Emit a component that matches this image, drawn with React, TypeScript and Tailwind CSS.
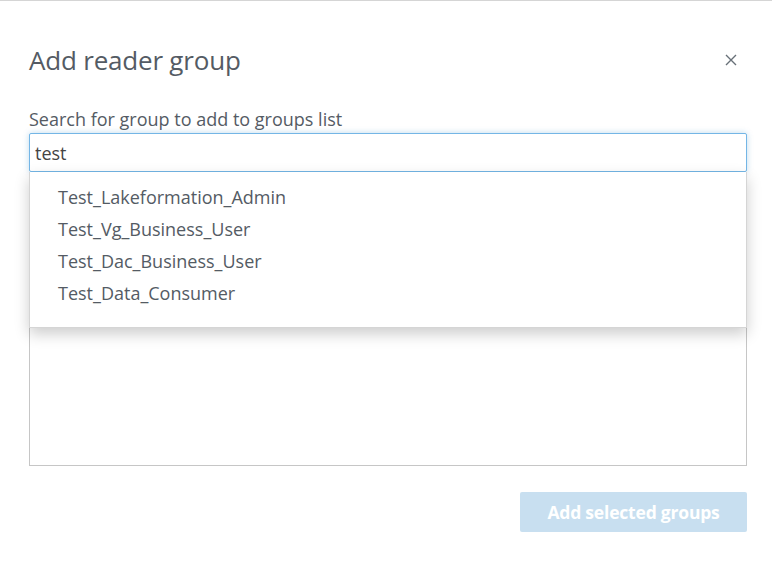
import React, { useState } from 'react';

const GROUPS = ['Test_Lakeformation_Admin', 'Test_Vg_Business_User', 'Test_Dac_Business_User', 'Test_Data_Consumer'];

export default function App() {
  const [query, setQuery] = useState('test');

  return (
    <div
      className="w-[772px] h-[564px] bg-white border-t border-[#d5d5d5] text-[#545b64] overflow-hidden"
      style={{ fontFamily: '"Open Sans", "Noto Sans", sans-serif' }}
    >
      {/* Header */}
      <div className="flex items-center justify-between pl-[29px] pr-[33px] pt-[39px]">
        <h1 className="text-[26px] leading-[40px] font-normal tracking-[-0.2px]">Add reader group</h1>
        <button className="text-[#687078] w-4 h-4 flex items-center justify-center">
          <svg width="12" height="12" viewBox="0 0 12 12" fill="none" stroke="currentColor" strokeWidth="1.4">
            <path d="M1 1 L11 11 M11 1 L1 11" />
          </svg>
        </button>
      </div>

      <div className="pl-[29px] pr-[25px] pt-[28px]">
        <label className="block text-[18px] leading-[22px] text-[#545b64]">
          Search for group to add to groups list
        </label>

        <div className="relative mt-[3px]">
          <input
            value={query}
            onChange={(e) => setQuery(e.target.value)}
            className="w-full h-[39px] border border-[#74b6e6] rounded-[2px] px-[5px] text-[18px] text-[#444] outline-none shadow-[0_0_6px_rgba(0,115,187,0.25)] bg-white"
          />

          {/* Dropdown */}
          <div className="absolute left-0 right-0 top-[39px] z-10 bg-white border border-[#d5d5d5] border-t-0 shadow-[0_6px_14px_rgba(0,0,0,0.2)] pt-[9px] pb-[18px]">
            {GROUPS.map((g) => (
              <div key={g} className="pl-[28px] h-[32px] flex items-center text-[18px] text-[#545b64]">
                {g}
              </div>
            ))}
          </div>

          {/* Selected groups list */}
          <div className="h-[294px] border border-[#c6c6c6] border-t-0 bg-white" />
        </div>

        <div className="flex justify-end pt-[26px]">
          <button
            disabled
            className="w-[227px] h-[40px] rounded-[2px] bg-[#c8dff0] text-white font-bold text-[17.5px] tracking-[-0.2px]"
          >
            Add selected groups
          </button>
        </div>
      </div>
    </div>
  );
}
